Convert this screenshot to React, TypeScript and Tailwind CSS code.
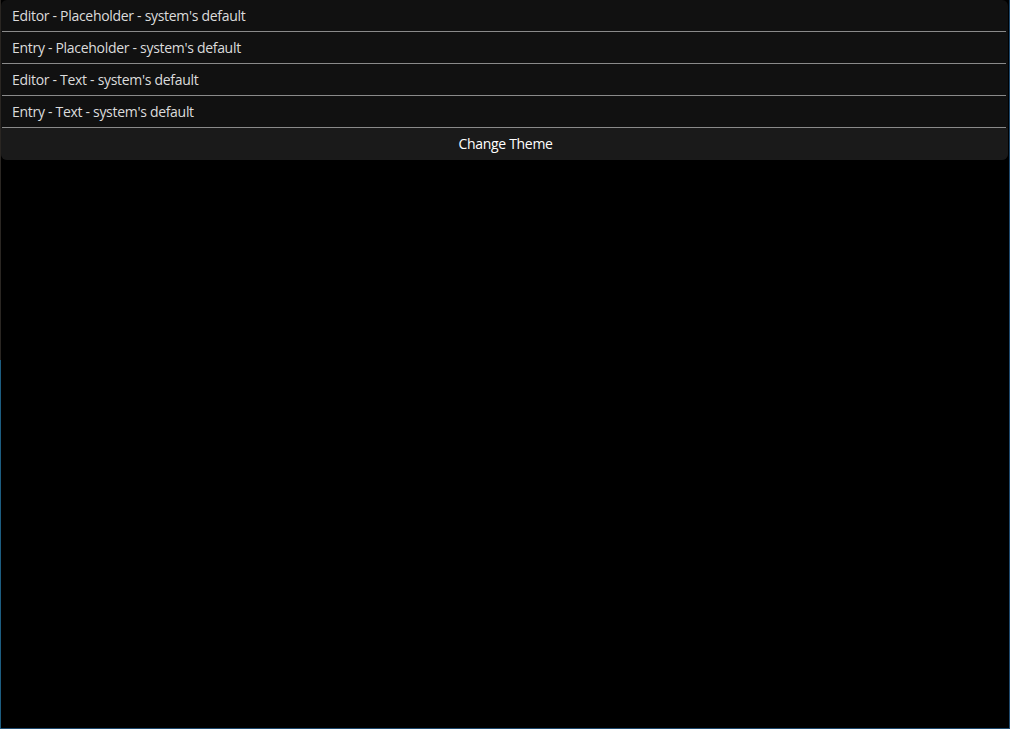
import React from 'react';

const fields = [
  'Editor - Placeholder - system\'s default',
  'Entry - Placeholder - system\'s default',
  'Editor - Text - system\'s default',
  'Entry - Text - system\'s default',
];

export default function App() {
  return (
    <div className="w-[1010px] h-[729px] bg-black flex overflow-hidden" style={{ fontFamily: '"Open Sans", "Noto Sans", sans-serif' }}>
      {/* window edge on the left */}
      <div className="w-px flex flex-col shrink-0">
        <div className="h-[360px] bg-[#2a2622]" />
        <div className="flex-1 bg-[#1d5d80]" />
      </div>
      <div className="flex-1 flex flex-col border-r border-b border-[#1f4a6e]">
        <div className="w-[1007px] rounded-md bg-[#111111] overflow-hidden">
          {fields.map((f) => (
            <div key={f} className="h-8 relative flex items-center pl-[11px] pb-[2px] text-[14px] text-[#dcdcdc]">
              <span className="tracking-[-0.3px]">{f}</span>
              <div className="absolute left-px right-[2px] bottom-0 h-px bg-[#8a8a8a]" />
            </div>
          ))}
          <button className="w-full h-8 pb-[2px] pl-[2px] bg-[#1a1a1a] text-white text-[14px] tracking-[-0.3px] flex items-center justify-center">
            Change Theme
          </button>
        </div>
      </div>
    </div>
  );
}
